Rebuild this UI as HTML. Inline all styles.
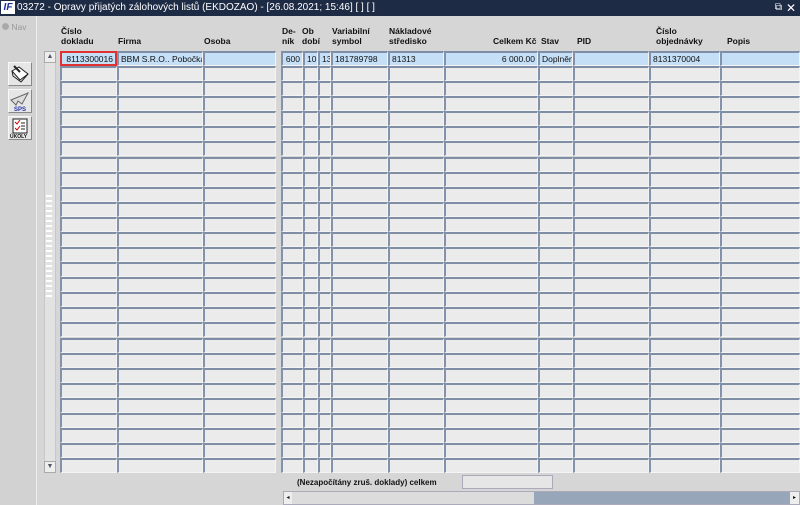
<!DOCTYPE html>
<html><head><meta charset="utf-8">
<style>
*{box-sizing:border-box;margin:0;padding:0}
body{width:800px;height:505px;overflow:hidden;background:#d6d6d6;font-family:"Liberation Sans",Arial,sans-serif;font-size:8.5px;color:#111;position:relative}
.t{position:absolute;left:0;top:0;width:800px;height:16px;background:#1e2b45;color:#fff;font-size:10px;line-height:16px}
.lp{position:absolute;left:0;top:16px;width:37px;height:489px;background:#d2d2d2;border-right:1px solid #ededed}
.h{position:absolute;font-weight:bold;font-size:8.5px;line-height:10px;color:#111}
.c{position:absolute;height:15px;background:#ebebeb;border-top:2px solid #7f8da5;border-left:2px solid #8392aa;border-right:1px solid #f4f4f4;border-bottom:1px solid #f4f4f4;line-height:12px;white-space:nowrap;overflow:hidden;padding:0 2px}
.s{background:#c5dff7}
.ic{position:absolute;left:8px;width:24px;height:24px;background:#e6e6e6;border:1px solid #f8f8f8;border-right-color:#888;border-bottom-color:#888}
</style></head><body>
<div class="t"><span style="display:inline-block;width:14px;height:13px;margin:1px 2px 0 1px;background:#fff;color:#1a2ea0;font-weight:bold;font-style:italic;font-size:10px;line-height:13px;text-align:center;vertical-align:top">IF</span>03272 - Opravy přijatých zálohových listů (EKDOZAO) - [26.08.2021; 15:46] [ ] [ ]
<span style="position:absolute;right:18px;top:0;font-size:10px">⧉</span><span style="position:absolute;right:4px;top:0;font-size:12px">✕</span></div>
<div class="lp">
<div style="position:absolute;left:2px;top:6px;color:#9a9a9a;font-size:8.5px"><span style="display:inline-block;width:7px;height:7px;border-radius:50%;background:#aaa"></span> Nav</div>
<div class="ic" style="top:46px"><svg width="22" height="22"><path d="M3 8l7-4 9 7-8 6z" fill="#fff" stroke="#222"/><path d="M3 8l1 5 8 6 7-8" fill="none" stroke="#222"/><path d="M5 3l6 6" stroke="#222" stroke-width="2"/></svg></div>
<div class="ic" style="top:73px"><svg width="22" height="22"><path d="M2 10l17-7-6 11-4-3-2 4z" fill="#ddd" stroke="#666"/><text x="5" y="21" font-size="6" font-weight="bold" fill="#2233aa" font-family="Liberation Sans">SPS</text></svg></div>
<div class="ic" style="top:100px"><svg width="22" height="22"><rect x="4" y="2" width="14" height="14" fill="#fff" stroke="#222"/><path d="M6 5l2 2 3-4M6 11l2 2 3-4" stroke="#c00" fill="none"/><path d="M12 6h4M12 9h4M12 12h4" stroke="#222"/><text x="1" y="21" font-size="5" font-weight="bold" fill="#111" font-family="Liberation Sans">ÚKOLY</text></svg></div>
</div>
<div class="h" style="left:61px;top:26px">Číslo<br>dokladu</div>
<div class="h" style="left:118px;top:36px">Firma</div>
<div class="h" style="left:204px;top:36px">Osoba</div>
<div class="h" style="left:282px;top:26px">De-<br>ník</div>
<div class="h" style="left:302px;top:26px">Ob<br>dobí</div>
<div class="h" style="left:332px;top:26px">Variabilní<br>symbol</div>
<div class="h" style="left:389px;top:26px">Nákladové<br>středisko</div>
<div class="h" style="left:493px;top:36px">Celkem Kč</div>
<div class="h" style="left:541px;top:36px">Stav</div>
<div class="h" style="left:577px;top:36px">PID</div>
<div class="h" style="left:656px;top:26px">Číslo<br>objednávky</div>
<div class="h" style="left:727px;top:36px">Popis</div>
<div style="position:absolute;left:44px;top:51px;width:12px;height:422px;background:#e2e2e2;border:1px solid #c8c8c8"></div>
<div style="position:absolute;left:44px;top:51px;width:12px;height:12px;background:#eee;border:1px solid #aaa;font-size:7px;text-align:center;line-height:10px;color:#556">▲</div>
<div style="position:absolute;left:44px;top:461px;width:12px;height:12px;background:#eee;border:1px solid #aaa;font-size:7px;text-align:center;line-height:10px;color:#556">▼</div>
<div style="position:absolute;left:46px;top:195px;width:6px;height:105px;background:repeating-linear-gradient(#fff 0 2px,transparent 2px 5px)"></div>
<div id="g"></div>
<div style="position:absolute;left:297px;top:478px;font-weight:bold;font-size:8px">(Nezapočítány zruš. doklady) celkem</div>
<div style="position:absolute;left:462px;top:475px;width:91px;height:14px;background:#e6e6e6;border:1px solid #aab"></div>
<div style="position:absolute;left:283px;top:491px;width:517px;height:14px;background:#98a6ba;border:1px solid #aab"></div>
<div style="position:absolute;left:292px;top:492px;width:242px;height:12px;background:#dcdcdc"></div>
<div style="position:absolute;left:284px;top:492px;width:8px;height:12px;background:#eee;font-size:6px;line-height:12px;text-align:center">◂</div>
<div style="position:absolute;left:790px;top:492px;width:9px;height:12px;background:#eee;font-size:6px;line-height:12px;text-align:center">▸</div>
<script>
var cols=[[60,57],[117,86],[203,73],[281,22],[303,15],[318,13],[331,57],[388,56],[444,94],[538,35],[573,76],[649,71],[720,80]];
var txt=["8113300016","BBM S.R.O.. Pobočka Brno","","600","10","13","181789798","81313","6 000.00","Doplněn","","8131370004",""];
var h="";
for(var r=0;r<28;r++){var y=Math.round(51+r*15.08);
for(var i=0;i<cols.length;i++){var c=cols[i];var st="left:"+c[0]+"px;top:"+y+"px;width:"+c[1]+"px;";
var cls="c";var t="";
if(r==0){cls+=" s";t=txt[i];if(i==0||i==3||i==8)st+="text-align:right;";if(i==0)st+="border:2px solid #e03030;";}
h+='<div class="'+cls+'" style="'+st+'">'+t+'</div>';}}
document.getElementById("g").innerHTML=h;
</script>
</body></html>
